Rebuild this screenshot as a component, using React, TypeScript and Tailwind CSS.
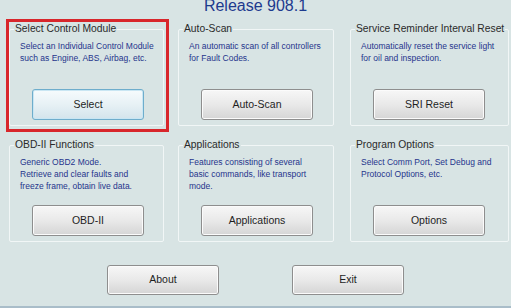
import type { ReactNode } from "react";

interface Group {
  title: string;
  lines: string[];
  button: string;
  width: string;
  gap: string;
  focused?: boolean;
}

const ROW_ONE: Group[] = [
  {
    title: "Select Control Module",
    lines: ["Select an Individual Control Module", "such as Engine, ABS, Airbag, etc."],
    button: "Select",
    width: "w-[155px]",
    gap: "ml-0",
    focused: true,
  },
  {
    title: "Auto-Scan",
    lines: ["An automatic scan of all controllers", "for Fault Codes."],
    button: "Auto-Scan",
    width: "w-[156px]",
    gap: "ml-[14px]",
  },
  {
    title: "Service Reminder Interval Reset",
    lines: ["Automatically reset the service light", "for oil and inspection."],
    button: "SRI Reset",
    width: "w-[159px]",
    gap: "ml-[16px]",
  },
];

const ROW_TWO: Group[] = [
  {
    title: "OBD-II Functions",
    lines: ["Generic OBD2 Mode.", "Retrieve and clear faults and", "freeze frame, obtain live data."],
    button: "OBD-II",
    width: "w-[155px]",
    gap: "ml-0",
  },
  {
    title: "Applications",
    lines: ["Features consisting of several", "basic commands, like transport", "mode."],
    button: "Applications",
    width: "w-[156px]",
    gap: "ml-[14px]",
  },
  {
    title: "Program Options",
    lines: ["Select Comm Port, Set Debug and", "Protocol Options, etc."],
    button: "Options",
    width: "w-[159px]",
    gap: "ml-[16px]",
  },
];

function WinButton({ children, focused }: { children: ReactNode; focused?: boolean }) {
  return (
    <button
      className={`w-[112px] h-[31px] rounded-[3px] border text-[10.5px] text-[#1e1e1e] flex items-center justify-center ${
        focused
          ? "border-[#6eadcc] bg-linear-to-b from-[#f6fbfd] via-[#e7f1f5] to-[#d3e4ec] shadow-[inset_0_0_0_1px_#c9e6f3]"
          : "border-[#8e8e8e] bg-linear-to-b from-[#f7f7f7] via-[#e9e9e9] to-[#d5d5d5] shadow-[inset_0_0_0_1px_#fbfbfb]"
      }`}
    >
      {children}
    </button>
  );
}

function GroupBox({ group }: { group: Group }) {
  return (
    <fieldset className={`${group.width} ${group.gap} h-[103px] border border-[#f1f6f6] rounded-[2px]`}>
      <legend className="ml-[4px] px-[1px] text-[10.3px] leading-[12px] text-[#2a2a2a] whitespace-nowrap">
        {group.title}
      </legend>
      <div className="mt-[5px] h-[49px] pl-[10px] text-[8.5px] leading-[12px] text-[#25348c] whitespace-nowrap">
        {group.lines.map((l) => (
          <div key={l}>{l}</div>
        ))}
      </div>
      <div className="ml-[22px]">
        <WinButton focused={group.focused}>{group.button}</WinButton>
      </div>
    </fieldset>
  );
}

export default function App() {
  return (
    <div
      className="relative w-[511px] h-[308px] overflow-hidden bg-[#d8e4e4] flex flex-col"
      style={{ fontFamily: '"Liberation Sans", Arial, sans-serif' }}
    >
      <div className="mt-[-3px] h-[18px] text-center text-[16px] leading-[18px] text-[#1d3a8e]">Release 908.1</div>

      <div className="mt-[8px] ml-[9px] flex">
        {ROW_ONE.map((g) => (
          <GroupBox key={g.title} group={g} />
        ))}
      </div>

      <div className="mt-[13px] ml-[9px] flex">
        {ROW_TWO.map((g) => (
          <GroupBox key={g.title} group={g} />
        ))}
      </div>

      <div className="mt-[23px] flex justify-center gap-[73px]">
        <button className="w-[112px] h-[30px] rounded-[3px] border border-[#8e8e8e] bg-linear-to-b from-[#f7f7f7] via-[#e9e9e9] to-[#d5d5d5] shadow-[inset_0_0_0_1px_#fbfbfb] text-[10.5px] text-[#1e1e1e]">
          About
        </button>
        <button className="w-[112px] h-[30px] rounded-[3px] border border-[#8e8e8e] bg-linear-to-b from-[#f7f7f7] via-[#e9e9e9] to-[#d5d5d5] shadow-[inset_0_0_0_1px_#fbfbfb] text-[10.5px] text-[#1e1e1e]">
          Exit
        </button>
      </div>

      <div className="mt-auto h-[2px] bg-[#a9bdc9]" />

      {/* red highlight drawn over the first group */}
      <div className="pointer-events-none absolute left-[6px] top-[19px] w-[163px] h-[113px] border-[3px] border-[#d8262b]" />
    </div>
  );
}
